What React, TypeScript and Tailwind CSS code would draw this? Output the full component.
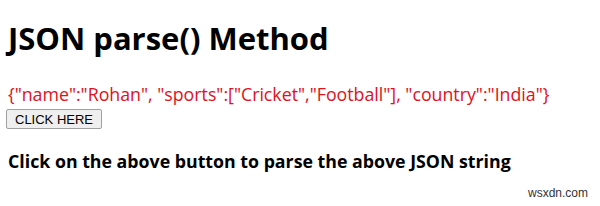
export default function App() {
    return (
        <div className="relative w-[600px] h-[206px] bg-white overflow-hidden font-['Open_Sans',sans-serif]">
            <div className="pl-2 pt-[23px]">
                <h1 className="text-[31px] leading-[31px] font-bold text-black">JSON parse() Method</h1>
                <p className="mt-[31px] text-[17.75px] leading-[18px] text-[#e0101c]">
                    {'{"name":"Rohan", "sports":["Cricket","Football"], "country":"India"}'}
                </p>
                <button className="-ml-[2px] mt-[6px] h-[20px] px-[8px] border border-[#a0a0a0] bg-[#efefef] rounded-[2px] text-[13px] leading-[17px] text-black font-['Liberation_Sans',sans-serif]">
                    CLICK HERE
                </button>
                <h3 className="mt-[22px] text-[17.75px] leading-[18px] font-bold text-black">
                    Click on the above button to parse the above JSON string
                </h3>
            </div>
            <span className="absolute right-[12px] bottom-[4px] text-[12px] text-[#333] font-['Liberation_Sans',sans-serif]">wsxdn.com</span>
        </div>
    );
}
